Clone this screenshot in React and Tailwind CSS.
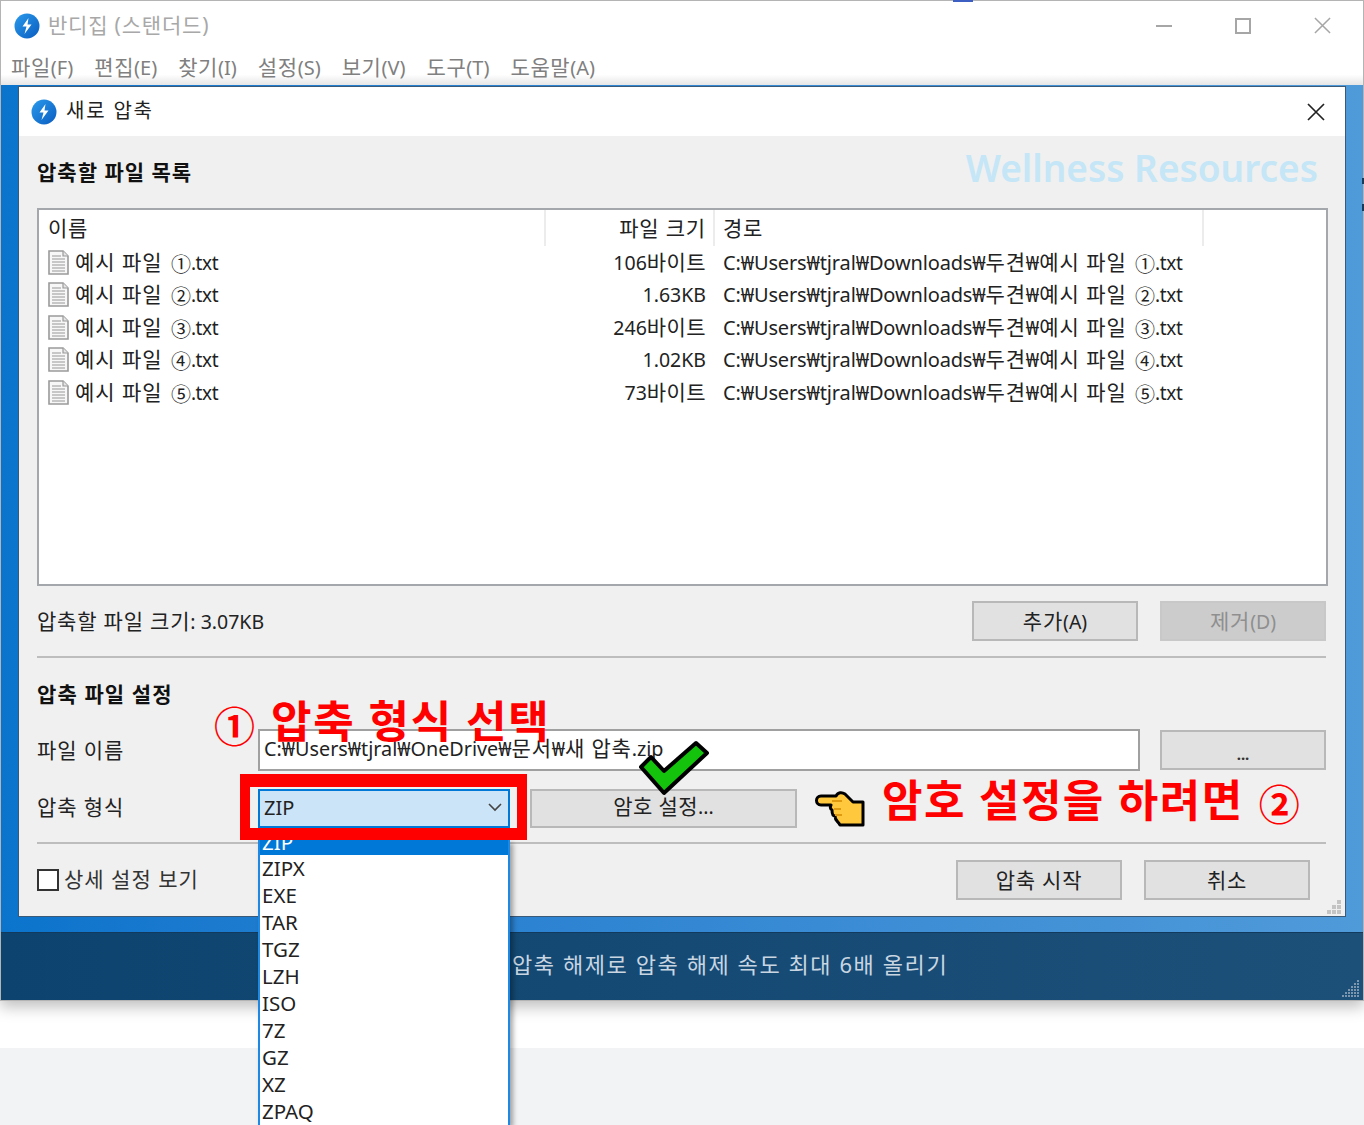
const FONT = "font-['Noto_Sans','Noto_Sans_CJK_KR',sans-serif]";

function Logo({ size = 26 }) {
  return (
    <svg width={size} height={size} viewBox="0 0 26 26" className="shrink-0">
      <defs>
        <linearGradient id="lg" x1="0" y1="0" x2="1" y2="1">
          <stop offset="0" stopColor="#2a9bec" />
          <stop offset="1" stopColor="#0a5cc0" />
        </linearGradient>
      </defs>
      <circle cx="13" cy="13" r="12.5" fill="url(#lg)" />
      <path d="M14.5 5 8.5 13.5 12.5 13.5 10.5 21 17.5 11.5 13.5 11.5Z" fill="#fff" />
    </svg>
  );
}

function FileIcon() {
  return (
    <svg width="21" height="25" viewBox="0 0 21 25" className="shrink-0">
      <path d="M1 1H15L20 6V24H1Z" fill="#f7f7f7" stroke="#9a9a9a" strokeWidth="1.6" />
      <path d="M15 1V6H20" fill="#e5e5e5" stroke="#9a9a9a" strokeWidth="1.2" />
      <path d="M4 6H13M4 9H17M4 12H17M4 15H17M4 18H17M4 21H17" stroke="#b8b8b8" strokeWidth="1.3" />
    </svg>
  );
}

// Hangul is drawn slightly larger and Latin slightly smaller than a single font size gives.
function Mix({ t, k = "text-[21px] tracking-[0.8px]", l = "text-[19.5px]" }) {
  return t
    .split(/([\uAC00-\uD7A3 ]+)/)
    .filter(Boolean)
    .map((part, i) => (
      <span key={i} className={/[\uAC00-\uD7A3]/.test(part) ? k : l}>{part}</span>
    ));
}

function Name({ n }) {
  return (
    <>
      <span className="text-[21px] tracking-[0.95px]">예시 파일 </span>
      <span className="ml-[2px] inline-block translate-y-[2px] text-[20px]">{n}</span>
      <span className="text-[19px] tracking-[-0.4px]">.txt</span>
    </>
  );
}

function Btn({ children, disabled = false, size = "h-[40px] w-[166px]" }) {
  const look = disabled
    ? "border-[#c8c8c8] bg-[#cccccc] text-[#8f8f8f]"
    : "border-[#b8b8b8] bg-[#e1e1e1] text-[#222]";
  return (
    <div className={`flex shrink-0 items-center justify-center border-2 pt-[1px] ${size} ${look}`}>
      {children}
    </div>
  );
}

function Grip() {
  const dots = [];
  for (let y = 0; y < 6; y++) {
    for (let x = 5 - y; x < 6; x++) dots.push([x * 3, y * 3]);
  }
  return (
    <svg className="absolute left-[1342px] top-[980px]" width="18" height="18" viewBox="0 0 18 18" fill="#7c97ad">
      {dots.map(([x, y]) => <rect key={`${x}-${y}`} x={x} y={y} width="2" height="2" />)}
    </svg>
  );
}

const files = [
  ["①", "106바이트"],
  ["②", "1.63KB"],
  ["③", "246바이트"],
  ["④", "1.02KB"],
  ["⑤", "73바이트"],
];

const menus = ["파일(F)", "편집(E)", "찾기(I)", "설정(S)", "보기(V)", "도구(T)", "도움말(A)"];
const formats = ["ZIPX", "EXE", "TAR", "TGZ", "LZH", "ISO", "7Z", "GZ", "XZ", "ZPAQ"];

export default function App() {
  return (
    <div className={`relative h-[1125px] w-[1364px] overflow-hidden bg-white ${FONT}`}>
      <div className="flex h-[1001px] w-[1364px] flex-col border border-[#b4b4b4] shadow-[0_6px_14px_rgba(0,0,0,0.25)]">
        {/* title bar */}
        <div className="flex h-[49px] shrink-0 items-center pl-[13px] pr-[32px]">
          <Logo />
          <span className="ml-[8px] text-[21px] tracking-[0.8px] text-[#a8a8a8]">반디집 (스탠더드)</span>
          <div className="ml-auto flex items-center gap-[63px]">
            <div className="h-[2px] w-[16px] bg-[#a6a6a6]" />
            <div className="h-[16px] w-[16px] border-2 border-[#a6a6a6]" />
            <svg width="17" height="17" viewBox="0 0 18 18"><path d="M1 1 17 17M17 1 1 17" stroke="#a6a6a6" strokeWidth="1.6" /></svg>
          </div>
        </div>
        {/* menu */}
        <div className="flex h-[35px] shrink-0 items-center gap-[21px] bg-gradient-to-b from-white from-70% to-[#e6e6e6] pl-[10px] leading-none text-[#808080]">
          {menus.map((m) => <span key={m}><Mix t={m} k="text-[21px] tracking-[0.6px]" l="text-[20px]" /></span>)}
        </div>
        {/* blue work area */}
        <div className="h-[847px] shrink-0 bg-gradient-to-r from-[#0a74cc] to-[#4f9ad9] pl-[17px] pt-px">
          <div className="flex h-[831px] w-[1328px] flex-col border border-[#3b5a78] bg-[#f0f0f0]">
            <div className="flex h-[49px] shrink-0 items-center bg-white pl-[12px] pr-[20px]">
              <Logo />
              <span className="ml-[9px] pb-[1px] text-[20px] tracking-[1.8px] text-[#222]">새로 압축</span>
              <svg className="ml-auto" width="18" height="18" viewBox="0 0 18 18"><path d="M1 1 17 17M17 1 1 17" stroke="#222" strokeWidth="1.7" /></svg>
            </div>
            <div className="flex flex-1 flex-col pl-[18px] pr-[18px]">
              <div className="flex h-[72px] shrink-0 items-start justify-between pr-[9px]">
                <span className="mt-[21px] text-[21px] font-bold tracking-[1px] text-[#111]">압축할 파일 목록</span>
                <span className="mt-[9px] text-[37px] font-semibold leading-[46px] text-[#c4e6f7]">Wellness Resources</span>
              </div>
              {/* list */}
              <div className="h-[378px] w-[1291px] shrink-0 border-2 border-[#a4a8ac] bg-white text-[#222]">
                <div className="flex h-[36px] items-center text-[21px] tracking-[0.8px]">
                  <div className="h-full w-[507px] border-r-2 border-[#ececec] pl-[9px] leading-[36px]">이름</div>
                  <div className="h-full w-[169px] border-r-2 border-[#ececec] pr-[7px] text-right leading-[36px]">파일 크기</div>
                  <div className="h-full w-[489px] border-r-2 border-[#ececec] pl-[8px] leading-[36px]">경로</div>
                </div>
                {files.map(([n, size]) => (
                  <div key={n} className="flex h-[32.5px] items-center whitespace-nowrap">
                    <div className="flex w-[507px] items-center pl-[9px]">
                      <FileIcon />
                      <span className="ml-[6px]"><Name n={n} /></span>
                    </div>
                    <div className="w-[169px] pr-[9px] text-right"><Mix t={size} k="text-[21px] tracking-[0.4px]" /></div>
                    <div className="pl-[8px]">
                      <span className="text-[20px] tracking-[-0.15px]">C:₩Users₩tjral₩Downloads₩</span>
                      <span className="text-[21px] tracking-[0.8px]">두견</span>
                      <span className="text-[20px]">₩</span>
                      <Name n={n} />
                    </div>
                  </div>
                ))}
              </div>
              <div className="mt-[15px] flex h-[40px] shrink-0 items-center justify-between pr-[1px]">
                <span className="pt-[2px] text-[#222]"><Mix t="압축할 파일 크기: 3.07KB" /></span>
                <div className="flex gap-[22px]">
                  <Btn><Mix t="추가(A)" /></Btn>
                  <Btn disabled><Mix t="제거(D)" /></Btn>
                </div>
              </div>
              <div className="mt-[15px] h-[2px] w-[1289px] shrink-0 bg-[#bdbdbd]" />
              <div className="mt-[23px] h-[26px] shrink-0 text-[21px] font-bold leading-[26px] tracking-[1.1px] text-[#111]">압축 파일 설정</div>
              <div className="mt-[22px] flex h-[42px] shrink-0 items-center pr-[1px]">
                <span className="w-[221px] pt-[2px] text-[21px] tracking-[0.9px] text-[#222]">파일 이름</span>
                <div className="flex h-[42px] w-[882px] items-center border-2 border-[#a0a0a0] bg-white pb-[3px] pl-[4px] text-[#222]">
                  <div><Mix t="C:₩Users₩tjral₩OneDrive₩문서₩새 압축.zip" l="text-[19.8px]" /></div>
                </div>
                <div className="ml-[20px]"><Btn><span className="-mb-[8px] text-[15px] font-bold leading-none text-[#333]">...</span></Btn></div>
              </div>
              <div className="mt-[18px] flex h-[39px] shrink-0 items-center">
                <span className="w-[221px] pb-[2px] text-[21px] tracking-[0.9px] text-[#222]">압축 형식</span>
                <div className="flex h-[39px] w-[252px] items-center justify-between border-2 border-[#0078d7] bg-[#cce4f7] pb-[2px] pl-[4px] pr-[6px] text-[20px] text-[#222]">
                  ZIP
                  <svg width="14" height="9" viewBox="0 0 14 9"><path d="M1 1 7 7 13 1" fill="none" stroke="#444" strokeWidth="1.6" /></svg>
                </div>
                <div className="ml-[20px]"><Btn size="h-[39px] w-[267px]"><span className="-translate-y-[2px]"><Mix t="암호 설정..." k="text-[21px] tracking-[0.4px]" /></span></Btn></div>
              </div>
              <div className="mt-[14px] h-[2px] w-[1289px] shrink-0 bg-[#bdbdbd]" />
              <div className="mt-[16px] flex h-[40px] shrink-0 items-center pr-[17px]">
                <div className="h-[22px] w-[22px] border-2 border-[#333] bg-white" />
                <span className="ml-[5px] text-[21px] tracking-[1px] text-[#333]">상세 설정 보기</span>
                <div className="ml-auto flex gap-[22px]">
                  <Btn><Mix t="압축 시작" /></Btn>
                  <Btn><Mix t="취소" /></Btn>
                </div>
              </div>
            </div>
          </div>
        </div>
        {/* bottom banner */}
        <div className="flex h-[68px] shrink-0 items-center border-t border-[#123a5c] bg-gradient-to-r from-[#0c446f] to-[#1d5079] pb-[4px] pl-[511px] text-[22px] tracking-[1.58px] text-[#c9d6e2]">
          압축 해제로 압축 해제 속도 최대 6배 올리기
        </div>
      </div>
      <div className="absolute left-0 right-0 top-[1048px] h-[77px] bg-[#f2f3f5]" />

      {/* window top accent */}
      <div className="absolute left-[953px] top-0 h-[2px] w-[20px] bg-[#3d5fc4]" />
      <div className="absolute left-[1362px] top-[178px] h-[6px] w-[2px] bg-[#1c3a55]" />
      <div className="absolute left-[1362px] top-[204px] h-[7px] w-[2px] bg-[#1c3a55]" />

      {/* dialog grip */}
      <svg className="absolute left-[1326px] top-[899px]" width="16" height="16" viewBox="0 0 16 16" fill="#c4c4c4">
        <rect x="11" y="1" width="4" height="4" /><rect x="6" y="6" width="4" height="4" /><rect x="11" y="6" width="4" height="4" />
        <rect x="1" y="11" width="4" height="4" /><rect x="6" y="11" width="4" height="4" /><rect x="11" y="11" width="4" height="4" />
      </svg>
      <Grip />

      {/* dropdown list */}
      <div className="absolute left-[258px] top-[840px] h-[285px] w-[252px] overflow-hidden border-x-2 border-[#1e88e5] bg-white text-[20.5px] leading-[27px] text-[#222] shadow-[3px_3px_5px_rgba(0,0,0,0.35)]">
        <div className="h-[15px] overflow-hidden bg-[#0078d7] pl-[2px] text-white"><div className="-mt-[11px]">ZIP</div></div>
        <div>
          {formats.map((f) => <div key={f} className="h-[27px] pl-[2px]">{f}</div>)}
        </div>
      </div>

      {/* red highlight */}
      <div className="absolute left-[240px] top-[774px] h-[66px] w-[287px] border-x-[10px] border-b-[12px] border-t-[13px] border-[#ff0000]" />

      {/* annotations */}
      <div className="absolute left-[214px] top-[699px] flex items-center whitespace-nowrap font-bold leading-none text-[#ff0000]">
        <span className="translate-y-[5px] text-[41px]">①</span>
        <span className="ml-[16px] text-[44px] tracking-[1.7px]">압축 형식 선택</span>
      </div>
      <div className="absolute left-[882px] top-[778px] flex items-center whitespace-nowrap font-bold leading-none text-[#ff0000]">
        <span className="text-[44px] tracking-[1.5px]">암호 설정을 하려면</span>
        <span className="ml-[15px] translate-y-[4px] text-[41px]">②</span>
      </div>

      {/* check mark */}
      <svg className="absolute left-[636px] top-[739px]" width="75" height="58" viewBox="0 0 75 58">
        <path d="M5 28 15 18 28 32 60 4 71 14 28 54Z" fill="#14c40c" stroke="#000" strokeWidth="4" strokeLinejoin="round" />
      </svg>

      {/* hand */}
      <svg className="absolute left-[814px] top-[791px]" width="52" height="36" viewBox="0 0 52 36">
        <path d="M7 5H22C24 1 28 1 31 3L39 11H49V34H26C24 30 21 30 21 25 18 25 18 21 18 19 16 18 16 16 17 14H7C1 14 1 5 7 5Z" fill="#ffc83d" stroke="#000" strokeWidth="3" strokeLinejoin="round" />
        <path d="M18 10H28M20 18H27M21 24H28" stroke="#e09a10" strokeWidth="2" />
      </svg>
    </div>
  );
}
